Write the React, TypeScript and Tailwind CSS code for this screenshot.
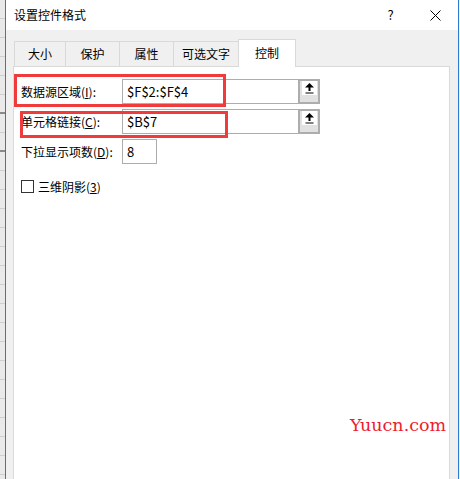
import React from "react";

const font = { fontFamily: '"Noto Sans CJK SC", "Noto Sans", sans-serif' };

function UpButton() {
  return (
    <div className="w-[22px] h-[25px] border-2 border-[#adadad] bg-[#e1e1e1] flex flex-col items-center">
      <div className="w-[15px] h-[14px] bg-white flex items-center justify-center">
        <svg width="9" height="11" viewBox="0 0 9 11">
          <polygon points="4.5,0 0,4.5 9,4.5" fill="#000" />
          <rect x="3.5" y="4" width="2" height="4" fill="#000" />
          <rect x="0.5" y="9.5" width="8" height="1" fill="#000" />
        </svg>
      </div>
    </div>
  );
}

export default function App() {
  const rows = Array.from({ length: 26 }, (_, i) => i);
  return (
    <div className="w-[460px] h-[479px] flex overflow-hidden bg-white text-black" style={font}>
      <div className="w-[5px] h-full flex flex-col bg-[#e9e9e9]">
        {rows.map((i) => (
          <div
            key={i}
            className={
              i === 5 || i === 7
                ? "h-[19px] shrink-0 border-b-2 border-[#8a8a8a]"
                : "h-[19px] shrink-0 border-b border-[#cfcfcf]"
            }
          />
        ))}
      </div>
      <div className="w-px h-full bg-[#2b7ad6]" />
      <div className="w-[452px] h-full flex flex-col">
        <div className="h-[30px] bg-white flex items-center shrink-0">
          <div className="pl-[8px] text-[12px] leading-[16px] flex-1">设置控件格式</div>
          <div className="w-[45px] flex justify-center text-[13px] leading-[16px]">?</div>
          <div className="w-[45px] flex justify-center">
            <svg width="11" height="11" viewBox="0 0 11 11">
              <path d="M0.5 0.5 L10.5 10.5 M10.5 0.5 L0.5 10.5" stroke="#000" strokeWidth="1" />
            </svg>
          </div>
        </div>
        <div className="flex-1 flex flex-col bg-[#f0f0f0] pt-[9px] pl-[7px] pr-[8px]">
          <div className="h-[27px] flex items-end ml-px text-[12px] leading-[16px]">
            <div className="w-[51px] h-[25px] border-t border-l border-[#d9d9d9] flex items-center justify-center">大小</div>
            <div className="w-[54px] h-[25px] border-t border-l border-[#d9d9d9] flex items-center justify-center">保护</div>
            <div className="w-[54px] h-[25px] border-t border-l border-[#d9d9d9] flex items-center justify-center">属性</div>
            <div className="w-[65px] h-[25px] border-t border-l border-[#d9d9d9] flex items-center justify-center">可选文字</div>
            <div className="relative z-10 w-[58px] h-[28px] -mb-px bg-white border-t border-l border-r border-[#d9d9d9] flex items-center justify-center pb-[1px]">控制</div>
          </div>
          <div className="relative flex-1 bg-white border border-b-0 border-[#d9d9d9]">
            <div className="flex flex-col gap-[5px] pt-[12px] pl-[7px] text-[12px] leading-[16px]">
              <div className="flex items-center h-[25px]">
                <div className="w-[101px]">
                  数据源区域(<span className="underline">I</span>):
                </div>
                <div className="w-[176px] h-[25px] border border-r-0 border-[#adadad] flex items-center pl-[4px] text-[13px]">$F$2:$F$4</div>
                <UpButton />
              </div>
              <div className="flex items-center h-[25px]">
                <div className="w-[101px]">
                  单元格链接(<span className="underline">C</span>):
                </div>
                <div className="w-[176px] h-[25px] border border-r-0 border-[#adadad] flex items-center pl-[4px] text-[13px]">$B$7</div>
                <UpButton />
              </div>
              <div className="flex items-center h-[25px]">
                <div className="w-[101px]">
                  下拉显示项数(<span className="underline">D</span>):
                </div>
                <div className="w-[35px] h-[25px] border border-[#adadad] flex items-center pl-[4px] text-[13px]">8</div>
              </div>
              <div className="flex items-center h-[13px] mt-[11px]">
                <div className="w-[13px] h-[13px] border border-[#333333] bg-white" />
                <div className="ml-[4px]">
                  三维阴影(<span className="underline">3</span>)
                </div>
              </div>
            </div>
            <div className="absolute left-0 top-[7px] w-[212px] h-[33px] border-[3px] border-[#ef3b3b]" />
            <div className="absolute left-[6px] top-[44px] w-[208px] h-[27px] border-[3px] border-[#ef3b3b]" />
            <div
              className="absolute left-[336px] top-[348px] text-[17.5px] leading-[20px] text-[#ee1b2e]"
              style={{ fontFamily: '"DejaVu Serif", serif' }}
            >
              Yuucn.com
            </div>
          </div>
        </div>
      </div>
      <div className="w-px h-full bg-[#2b7ad6]" />
      <div className="w-px h-full bg-[#f0f0f0]" />
    </div>
  );
}
